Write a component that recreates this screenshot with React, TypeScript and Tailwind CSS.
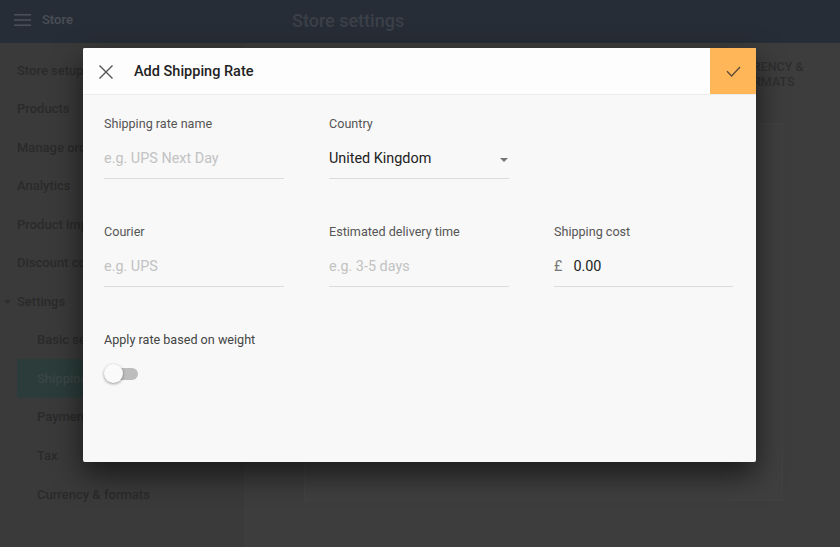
import React from 'react';

const sideItems = [
  { label: 'Store setup', sub: false },
  { label: 'Products', sub: false },
  { label: 'Manage orders', sub: false },
  { label: 'Analytics', sub: false },
  { label: 'Product import', sub: false },
  { label: 'Discount codes', sub: false },
  { label: 'Settings', sub: false, caret: true },
  { label: 'Basic settings', sub: true },
  { label: 'Shipping', sub: true, active: true },
  { label: 'Payments', sub: true },
  { label: 'Tax', sub: true },
  { label: 'Currency & formats', sub: true },
];

const Field = ({
  label,
  value,
  placeholder,
  prefix,
  select,
}: {
  label: string;
  value?: string;
  placeholder?: string;
  prefix?: string;
  select?: boolean;
}) => (
  <div className="flex flex-col">
    <div className="h-[16px] text-[12.6px] leading-[16px] text-[#555555]">{label}</div>
    <div className="mt-[18px] flex h-[18px] items-center text-[14.4px] leading-[18px]">
      {prefix && <span className="mr-[11px] text-[#777777]">{prefix}</span>}
      {value ? (
        <span className="text-[#222222]">{value}</span>
      ) : (
        <span className="text-[#c2c2c2]">{placeholder}</span>
      )}
      {select && (
        <svg className="ml-auto mr-[1px] mt-[2px]" width="8" height="4" viewBox="0 0 8 4">
          <path d="M0 0h8L4 4z" fill="#757575" />
        </svg>
      )}
    </div>
    <div className="mt-[10px] h-px bg-[#dcdcdc]" />
  </div>
);

export default function App() {
  return (
    <div
      className="relative h-[547px] w-full overflow-hidden bg-[#3d3d3d]"
      style={{ fontFamily: 'Roboto, "Liberation Sans", sans-serif' }}
    >
      {/* app header (dimmed) */}
      <div className="flex h-[43px] items-center bg-[#272d36] pb-[3px]">
        <div className="flex w-[292px] items-center pl-[14px]">
          <svg width="17" height="12" viewBox="0 0 17 12">
            <rect y="0" width="17" height="1.6" fill="#4a4f57" />
            <rect y="5.2" width="17" height="1.6" fill="#4a4f57" />
            <rect y="10.4" width="17" height="1.6" fill="#4a4f57" />
          </svg>
          <span className="ml-[11px] text-[13px] font-medium text-[#4a4f57]">Store</span>
        </div>
        <span className="text-[18px] font-medium text-[#3b4048]">Store settings</span>
      </div>

      <div className="flex h-[504px]">
        {/* sidebar */}
        <div className="w-[244px] bg-[#3a3a3a] pt-[8px]">
          {sideItems.map((it) => (
            <div
              key={it.label}
              className={`relative flex h-[38.55px] items-center text-[13px] font-medium ${
                it.sub ? 'ml-[17px] pl-[20px]' : 'pl-[17px]'
              } ${it.active ? 'bg-[#2b3c3a] text-[#3b4645]' : 'text-[#2a2a2a]'}`}
            >
              {it.caret && (
                <svg className="absolute left-[4px]" width="7" height="4" viewBox="0 0 7 4">
                  <path d="M0 0h7L3.5 4z" fill="#2e2e2e" />
                </svg>
              )}
              {it.label}
            </div>
          ))}
        </div>

        {/* main content (dimmed) */}
        <div className="flex flex-1 flex-col">
          <div className="flex h-[80px] justify-end pr-[24px] pt-[16px]">
            <div className="w-[100px] text-center text-[12.5px] font-medium uppercase leading-[15px] text-[#2e2e2e]">
              Currency &amp;
              <br />
              Formats
            </div>
          </div>
          <div className="ml-[60px] mr-[57px] h-[378px] border border-[#424242] bg-[#3f3f3f]" />
        </div>
      </div>

      {/* modal */}
      <div className="absolute left-[83px] top-[48px] flex h-[414px] w-[673px] flex-col overflow-hidden rounded-[2px] bg-[#f8f8f8] shadow-[0_12px_30px_rgba(0,0,0,0.6)]">
        <div className="flex h-[47px] items-center border-b border-[#ececec] bg-[#fdfdfd]">
          <svg className="ml-[16px] mt-[1px]" width="14" height="14" viewBox="0 0 14 14">
            <path d="M0.5 0.5L13.5 13.5M13.5 0.5L0.5 13.5" stroke="#555555" strokeWidth="1.4" />
          </svg>
          <span className="ml-[21px] mt-[2px] text-[14.5px] font-medium text-[#222222]">Add Shipping Rate</span>
          <button className="ml-auto flex h-full w-[46px] items-center justify-center bg-[#ffb658]">
            <svg width="15" height="11" viewBox="0 0 15 11">
              <path d="M1 5.2L5.6 10 14 1" fill="none" stroke="#5a4a36" strokeWidth="1.3" />
            </svg>
          </button>
        </div>

        <div className="px-[21px] pt-[21px]">
          <div className="grid grid-cols-[180px_180px_179px] gap-x-[45px] gap-y-[45px]">
            <Field label="Shipping rate name" placeholder="e.g. UPS Next Day" />
            <Field label="Country" value="United Kingdom" select />
            <div />
            <Field label="Courier" placeholder="e.g. UPS" />
            <Field label="Estimated delivery time" placeholder="e.g. 3-5 days" />
            <Field label="Shipping cost" value="0.00" prefix="£" />
          </div>

          <div className="mt-[45px] h-[16px] text-[12.6px] leading-[16px] text-[#444444]">
            Apply rate based on weight
          </div>
          <div className="relative mt-[16px] h-[19px] w-[34px]">
            <div className="absolute left-[4px] top-[4px] h-[12px] w-[30px] rounded-full bg-[#bdbdbd]" />
            <div className="absolute left-0 top-0 h-[19px] w-[19px] rounded-full bg-[#fafafa] shadow-[0_1px_3px_rgba(0,0,0,0.4)]" />
          </div>
        </div>
      </div>
    </div>
  );
}
